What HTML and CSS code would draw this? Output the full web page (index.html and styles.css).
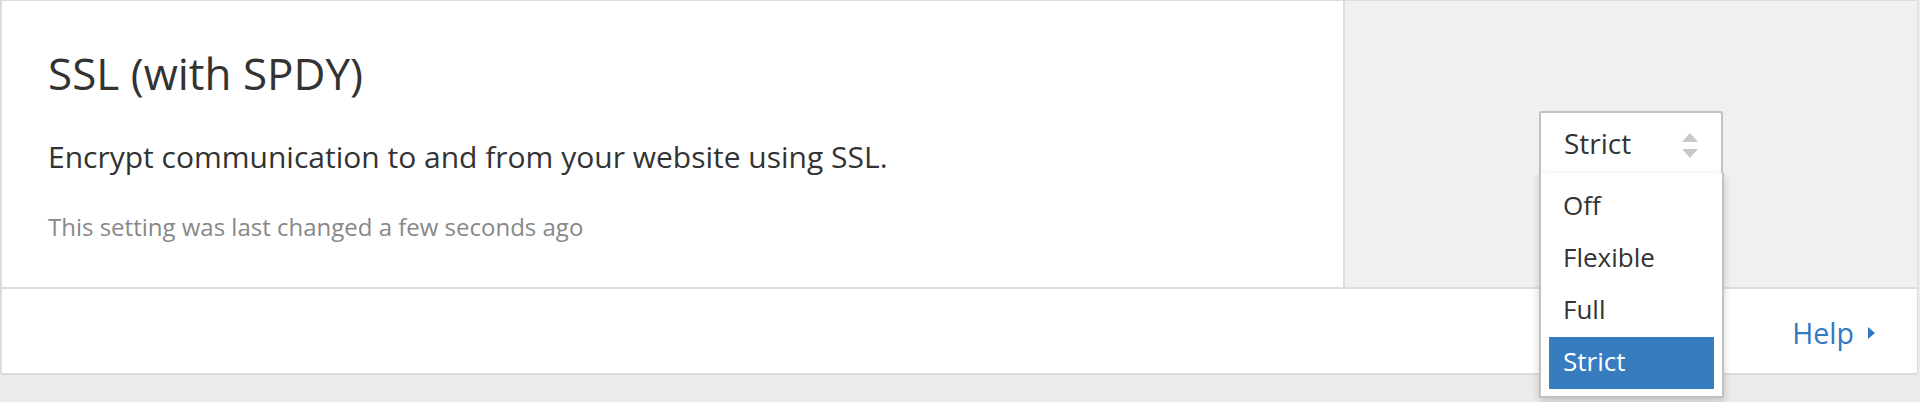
FILE: index.html
```html
<!DOCTYPE html>
<html>
<head>
<meta charset="utf-8">
<link rel="stylesheet" href="styles.css">
</head>
<body>
<div class="card">
  <div class="main">
    <div class="info">
      <h3 class="title">SSL (with SPDY)</h3>
      <p class="desc">Encrypt communication to and from your website using SSL.</p>
      <p class="note">This setting was last changed a few seconds ago</p>
    </div>
    <div class="control">
      <div class="select">
        <div class="select-box">
          <span class="select-value">Strict</span>
          <svg class="arrows" width="16" height="26" viewBox="0 0 16 26"><polygon points="0,9 8,0 16,9" fill="#c8c8c8"/><polygon points="0,16 16,16 8,25" fill="#c8c8c8"/></svg>
        </div>
        <ul class="dropdown">
          <li class="option">Off</li>
          <li class="option">Flexible</li>
          <li class="option">Full</li>
          <li class="option selected">Strict</li>
        </ul>
      </div>
    </div>
  </div>
  <div class="footer">
    <a class="help" href="#">Help</a>
    <svg class="help-caret" width="7" height="12" viewBox="0 0 7 12"><polygon points="0,0 7,6 0,12" fill="#3179c0"/></svg>
  </div>
</div>
</body>
</html>
```

FILE: styles.css
```css
html, body {
  margin: 0;
  padding: 0;
  background: #ebebeb;
  font-family: "Open Sans", "Noto Sans", "Liberation Sans", sans-serif;
  color: #333333;
}

body {
  min-height: 100vh;
}

.card {
  background: #ffffff;
  margin-right: 2px;
  border-style: solid;
  border-color: #dcdcdc;
  border-width: 1px 1px 2px 2px;
  border-radius: 0 0 3px 3px;
}

.main {
  display: flex;
  height: 286px;
}

.info {
  flex: 1;
  padding: 46px 0 0 46px;
}

.title {
  margin: 0;
  font-size: 44px;
  line-height: 52px;
  font-weight: 400;
  color: #333333;
}

.desc {
  margin: 38px 0 0;
  font-size: 30px;
  line-height: 40px;
  color: #333333;
}

.note {
  margin: 34px 0 0;
  font-size: 24px;
  line-height: 32px;
  color: #888888;
}

.control {
  width: 574px;
  flex: none;
  background: #f0f0f0;
  border-left: 2px solid #dddddd;
  display: flex;
  align-items: center;
  justify-content: center;
  padding-bottom: 4px;
  box-sizing: border-box;
}

.select {
  position: relative;
  width: 184px;
}

.select-box {
  height: 62px;
  box-sizing: border-box;
  background: #ffffff;
  border: 2px solid #c2c2c2;
  border-bottom: 0;
  border-radius: 3px 3px 0 0;
  display: flex;
  align-items: center;
  padding: 0 23px;
}

.select-value {
  font-size: 28px;
  line-height: 40px;
  color: #333333;
}

.arrows {
  margin-left: auto;
  margin-top: 5px;
}

.dropdown {
  position: absolute;
  top: 100%;
  left: 0;
  width: 185px;
  box-sizing: border-box;
  margin: 0;
  list-style: none;
  background: #ffffff;
  border: 2px solid #c2c2c2;
  border-top: 0;
  padding: 8px 8px 7px;
  box-shadow: 0 3px 8px rgba(0, 0, 0, 0.18);
  z-index: 2;
}

.option {
  height: 52px;
  box-sizing: border-box;
  padding: 0 0 3px 14px;
  font-size: 26px;
  line-height: 49px;
  color: #333333;
}

.option.selected {
  background: #367cbf;
  color: #ffffff;
}

.footer {
  height: 86px;
  box-sizing: border-box;
  border-top: 2px solid #dddddd;
  display: flex;
  justify-content: flex-end;
  align-items: center;
  padding: 4px 42px 0 0;
}

.help {
  font-size: 28.5px;
  line-height: 40px;
  color: #3179c0;
  text-decoration: none;
}

.help-caret {
  margin-left: 14px;
}
```
